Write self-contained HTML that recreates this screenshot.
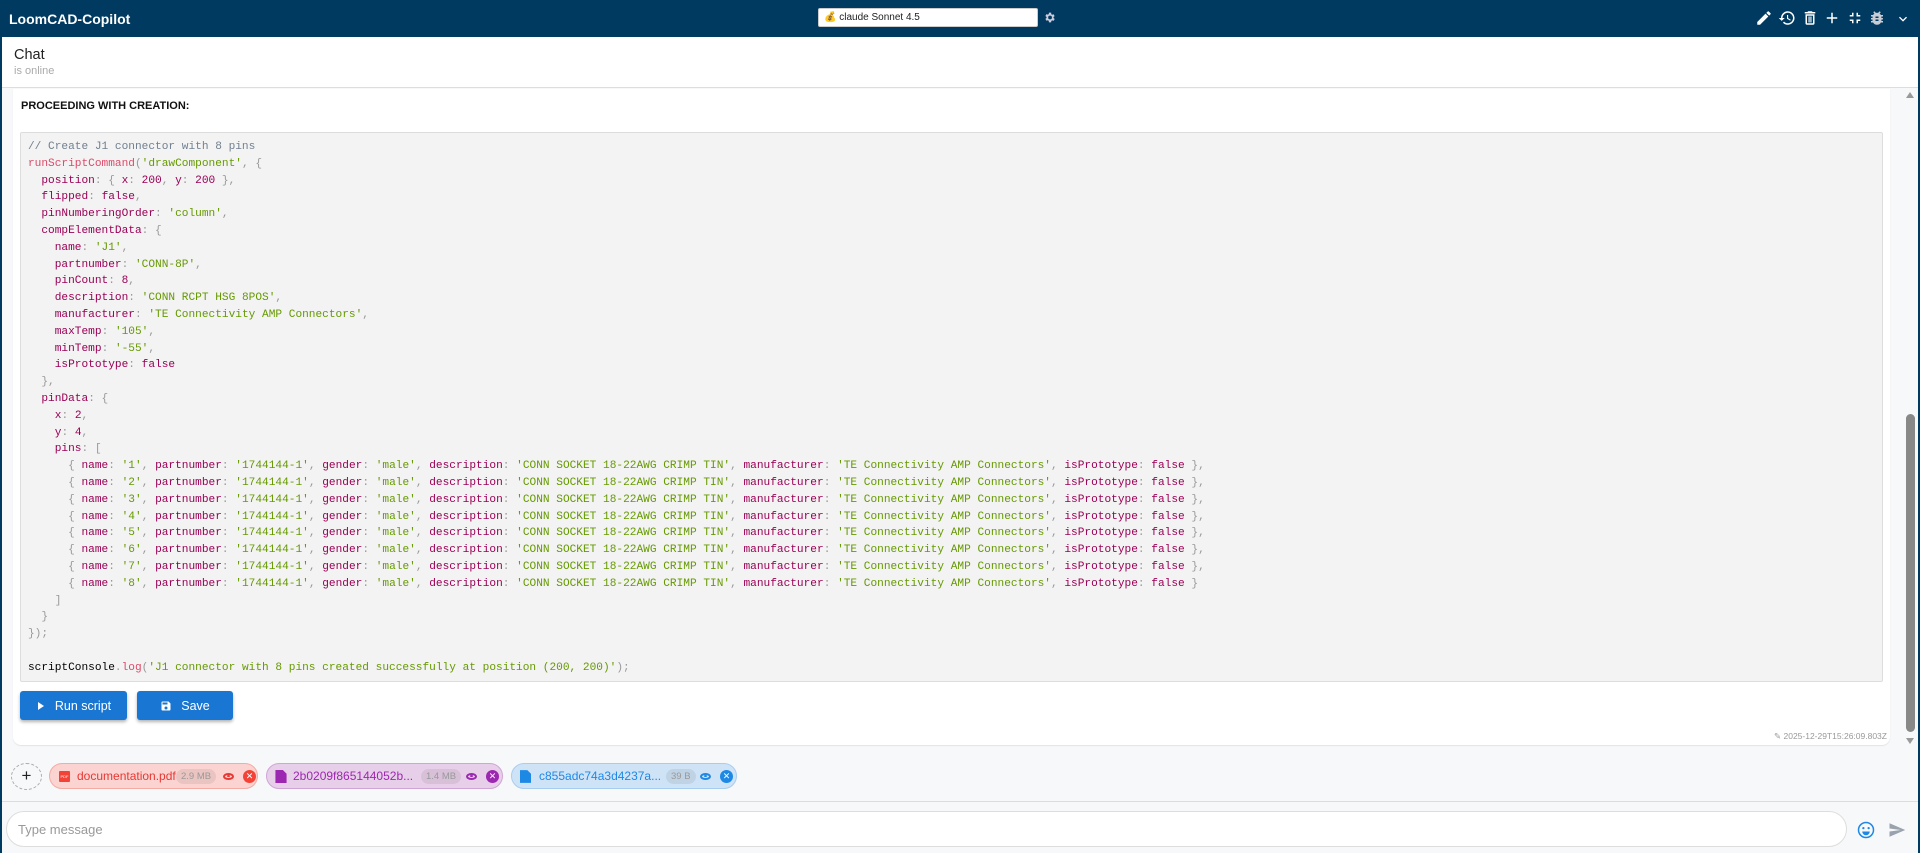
<!DOCTYPE html>
<html><head><meta charset="utf-8"><style>
*{box-sizing:border-box;margin:0;padding:0}
body{width:1920px;height:853px;overflow:hidden;font-family:"Liberation Sans",sans-serif;background:#f7f8fa;position:relative}
.hdr{position:absolute;left:0;top:0;width:1920px;height:37px;background:#003a60;color:#fff}
.hdr .t{position:absolute;left:9px;top:11px;font-size:14px;font-weight:bold}
.sel{position:absolute;left:818px;top:8px;width:220px;height:19px;background:#fff;border:1px solid #ccc;border-radius:2px;font-size:10px;color:#222;padding:3px 0 0 5px}
.chat{position:absolute;left:2px;top:37px;width:1916px;height:51px;background:#fff;border-bottom:1px solid #ddd}
.wrap{position:absolute;left:0;top:0;width:2px;height:853px;background:#003a60}
.wrapr{position:absolute;right:0;top:0;width:2px;height:853px;background:#003a60}
.card{position:absolute;left:13px;top:89px;width:1877px;height:656px;background:#fff;border-radius:0 0 8px 8px;box-shadow:0 1px 1px #e3e3e3}
.code{position:absolute;left:7px;top:43px;width:1863px;height:550px;background:#f3f3f3;border:1px solid #ddd;border-radius:2px;font-family:"Liberation Mono",monospace;font-size:11.15px;line-height:16.8px;padding:6px 0 0 7px;white-space:pre;color:#000}
.k{color:#990055}.s{color:#669900}.p{color:#999}.f{color:#dd4a68}.c{color:#708090}
.btn{position:absolute;top:691px;height:29px;background:#1976d2;color:#fff;font-size:12.5px;border-radius:3px;box-shadow:0 2px 3px rgba(0,0,0,.3);display:flex;align-items:center;justify-content:center;gap:9px}
.chip{position:absolute;top:763px;height:26px;border-radius:13px;border:1px solid;font-size:12px;display:flex;align-items:center}
.sz{font-size:9.5px;color:#999;background:rgba(0,0,0,.07);border-radius:8px;padding:2px 5px;position:absolute}
.inp{position:absolute;left:6px;top:811px;width:1841px;height:36px;background:#fff;border:1px solid #ddd;border-radius:18px;font-size:13px;color:#999;padding:10px 0 0 11px}
.eye{position:absolute;width:11px;height:7px;border:2px solid;border-radius:50%}
.eye:after{content:"";position:absolute;left:2px;top:0.5px;width:3px;height:2px;background:currentColor;border-radius:50%}
</style></head><body>
<div class="hdr"><div class="t">LoomCAD-Copilot</div>
<div class="sel">💰 claude Sonnet 4.5</div>
<svg style="position:absolute;left:1043px;top:11px" width="13" height="13" viewBox="0 0 24 24"><path fill="#ccd" d="M19.4 13a7.5 7.5 0 000-2l2.1-1.6-2-3.5-2.5 1a7 7 0 00-1.7-1L15 3h-4l-.4 2.7a7 7 0 00-1.7 1l-2.5-1-2 3.5L6.5 11a7.5 7.5 0 000 2l-2.1 1.6 2 3.5 2.5-1a7 7 0 001.7 1L11 21h4l.4-2.7a7 7 0 001.7-1l2.5 1 2-3.5zM13 15.5a3.5 3.5 0 110-7 3.5 3.5 0 010 7z"/></svg>
<svg style="position:absolute;left:1755px;top:9px" width="18" height="18" viewBox="0 0 24 24"><path fill="#fff" d="M3 17.25V21h3.75L17.8 9.94l-3.750-3.75zM20.7 7.04a1 1 0 000-1.41l-2.34-2.34a1 1 0 00-1.41 0l-1.83 1.83 3.75 3.75z"/></svg>
<svg style="position:absolute;left:1778px;top:9px" width="18" height="18" viewBox="0 0 24 24"><path fill="#fff" d="M13 3a9 9 0 00-9 9H1l3.9 3.9L9 12H6a7 7 0 112 4.9l-1.4 1.4A9 9 0 1013 3zm-1 5v5l4.3 2.5.7-1.2-3.5-2.1V8z"/></svg>
<svg style="position:absolute;left:1801px;top:9px" width="18" height="18" viewBox="0 0 24 24"><path fill="#fff" d="M6 19a2 2 0 002 2h8a2 2 0 002-2V7H6zM8 9h8v10H8zm7.5-5l-1-1h-5l-1 1H5v2h14V4zM10 10h1.5v8H10zm2.5 0H14v8h-1.5z"/></svg>
<svg style="position:absolute;left:1823px;top:9px" width="18" height="18" viewBox="0 0 24 24"><path fill="#fff" d="M19 13h-6v6h-2v-6H5v-2h6V5h2v6h6z"/></svg>
<svg style="position:absolute;left:1846px;top:9px" width="18" height="18" viewBox="0 0 24 24"><path fill="#fff" d="M5 16h3v3h2v-5H5zm3-8H5v2h5V5H8zm6 11h2v-3h3v-2h-5zm2-11V5h-2v5h5V8z"/></svg>
<svg style="position:absolute;left:1868px;top:9px" width="18" height="18" viewBox="0 0 24 24"><path fill="#c8ccd4" d="M20 8h-2.8a6 6 0 00-1.8-2l1.6-1.6L15.6 3l-2.2 2.2a6 6 0 00-2.8 0L8.4 3 7 4.4 8.6 6a6 6 0 00-1.8 2H4v2h2.1a6 6 0 000 1V12H4v2h2v1a6 6 0 000 1H4v2h2.8A6 6 0 0017.2 18H20v-2h-2.1a6 6 0 000-1v-1h2v-2h-2v-1a6 6 0 000-1H20zm-6 8h-4v-2h4zm0-4h-4v-2h4z"/></svg>
<svg style="position:absolute;left:1895px;top:11px" width="16" height="16" viewBox="0 0 24 24"><path fill="#fff" d="M7.4 8.6L12 13.2l4.6-4.6L18 10l-6 6-6-6z"/></svg>
</div>
<div class="wrap"></div><div class="wrapr"></div>
<div class="chat"><div style="position:absolute;left:12px;top:10px;font-size:14.5px;color:#222">Chat</div><div style="position:absolute;left:12px;top:28px;font-size:11px;color:#aaa">is online</div></div>
<div class="card">
<div style="position:absolute;left:8px;top:11px;font-size:11px;font-weight:bold;color:#111">PROCEEDING WITH CREATION:</div>
<div class="code"><span class="c">// Create J1 connector with 8 pins</span>
<span class="f">runScriptCommand</span><span class="p">(</span><span class="s">'drawComponent'</span><span class="p">, {</span>
  <span class="k">position</span><span class="p">: {</span> <span class="k">x</span><span class="p">:</span> <span class="k">200</span><span class="p">,</span> <span class="k">y</span><span class="p">:</span> <span class="k">200</span> <span class="p">},</span>
  <span class="k">flipped</span><span class="p">:</span> <span class="k">false</span><span class="p">,</span>
  <span class="k">pinNumberingOrder</span><span class="p">:</span> <span class="s">'column'</span><span class="p">,</span>
  <span class="k">compElementData</span><span class="p">: {</span>
    <span class="k">name</span><span class="p">:</span> <span class="s">'J1'</span><span class="p">,</span>
    <span class="k">partnumber</span><span class="p">:</span> <span class="s">'CONN-8P'</span><span class="p">,</span>
    <span class="k">pinCount</span><span class="p">:</span> <span class="k">8</span><span class="p">,</span>
    <span class="k">description</span><span class="p">:</span> <span class="s">'CONN RCPT HSG 8POS'</span><span class="p">,</span>
    <span class="k">manufacturer</span><span class="p">:</span> <span class="s">'TE Connectivity AMP Connectors'</span><span class="p">,</span>
    <span class="k">maxTemp</span><span class="p">:</span> <span class="s">'105'</span><span class="p">,</span>
    <span class="k">minTemp</span><span class="p">:</span> <span class="s">'-55'</span><span class="p">,</span>
    <span class="k">isPrototype</span><span class="p">:</span> <span class="k">false</span>
  <span class="p">},</span>
  <span class="k">pinData</span><span class="p">: {</span>
    <span class="k">x</span><span class="p">:</span> <span class="k">2</span><span class="p">,</span>
    <span class="k">y</span><span class="p">:</span> <span class="k">4</span><span class="p">,</span>
    <span class="k">pins</span><span class="p">: [</span>
      <span class="p">{</span> <span class="k">name</span><span class="p">:</span> <span class="s">'1'</span><span class="p">,</span> <span class="k">partnumber</span><span class="p">:</span> <span class="s">'1744144-1'</span><span class="p">,</span> <span class="k">gender</span><span class="p">:</span> <span class="s">'male'</span><span class="p">,</span> <span class="k">description</span><span class="p">:</span> <span class="s">'CONN SOCKET 18-22AWG CRIMP TIN'</span><span class="p">,</span> <span class="k">manufacturer</span><span class="p">:</span> <span class="s">'TE Connectivity AMP Connectors'</span><span class="p">,</span> <span class="k">isPrototype</span><span class="p">:</span> <span class="k">false</span> <span class="p">},</span>
      <span class="p">{</span> <span class="k">name</span><span class="p">:</span> <span class="s">'2'</span><span class="p">,</span> <span class="k">partnumber</span><span class="p">:</span> <span class="s">'1744144-1'</span><span class="p">,</span> <span class="k">gender</span><span class="p">:</span> <span class="s">'male'</span><span class="p">,</span> <span class="k">description</span><span class="p">:</span> <span class="s">'CONN SOCKET 18-22AWG CRIMP TIN'</span><span class="p">,</span> <span class="k">manufacturer</span><span class="p">:</span> <span class="s">'TE Connectivity AMP Connectors'</span><span class="p">,</span> <span class="k">isPrototype</span><span class="p">:</span> <span class="k">false</span> <span class="p">},</span>
      <span class="p">{</span> <span class="k">name</span><span class="p">:</span> <span class="s">'3'</span><span class="p">,</span> <span class="k">partnumber</span><span class="p">:</span> <span class="s">'1744144-1'</span><span class="p">,</span> <span class="k">gender</span><span class="p">:</span> <span class="s">'male'</span><span class="p">,</span> <span class="k">description</span><span class="p">:</span> <span class="s">'CONN SOCKET 18-22AWG CRIMP TIN'</span><span class="p">,</span> <span class="k">manufacturer</span><span class="p">:</span> <span class="s">'TE Connectivity AMP Connectors'</span><span class="p">,</span> <span class="k">isPrototype</span><span class="p">:</span> <span class="k">false</span> <span class="p">},</span>
      <span class="p">{</span> <span class="k">name</span><span class="p">:</span> <span class="s">'4'</span><span class="p">,</span> <span class="k">partnumber</span><span class="p">:</span> <span class="s">'1744144-1'</span><span class="p">,</span> <span class="k">gender</span><span class="p">:</span> <span class="s">'male'</span><span class="p">,</span> <span class="k">description</span><span class="p">:</span> <span class="s">'CONN SOCKET 18-22AWG CRIMP TIN'</span><span class="p">,</span> <span class="k">manufacturer</span><span class="p">:</span> <span class="s">'TE Connectivity AMP Connectors'</span><span class="p">,</span> <span class="k">isPrototype</span><span class="p">:</span> <span class="k">false</span> <span class="p">},</span>
      <span class="p">{</span> <span class="k">name</span><span class="p">:</span> <span class="s">'5'</span><span class="p">,</span> <span class="k">partnumber</span><span class="p">:</span> <span class="s">'1744144-1'</span><span class="p">,</span> <span class="k">gender</span><span class="p">:</span> <span class="s">'male'</span><span class="p">,</span> <span class="k">description</span><span class="p">:</span> <span class="s">'CONN SOCKET 18-22AWG CRIMP TIN'</span><span class="p">,</span> <span class="k">manufacturer</span><span class="p">:</span> <span class="s">'TE Connectivity AMP Connectors'</span><span class="p">,</span> <span class="k">isPrototype</span><span class="p">:</span> <span class="k">false</span> <span class="p">},</span>
      <span class="p">{</span> <span class="k">name</span><span class="p">:</span> <span class="s">'6'</span><span class="p">,</span> <span class="k">partnumber</span><span class="p">:</span> <span class="s">'1744144-1'</span><span class="p">,</span> <span class="k">gender</span><span class="p">:</span> <span class="s">'male'</span><span class="p">,</span> <span class="k">description</span><span class="p">:</span> <span class="s">'CONN SOCKET 18-22AWG CRIMP TIN'</span><span class="p">,</span> <span class="k">manufacturer</span><span class="p">:</span> <span class="s">'TE Connectivity AMP Connectors'</span><span class="p">,</span> <span class="k">isPrototype</span><span class="p">:</span> <span class="k">false</span> <span class="p">},</span>
      <span class="p">{</span> <span class="k">name</span><span class="p">:</span> <span class="s">'7'</span><span class="p">,</span> <span class="k">partnumber</span><span class="p">:</span> <span class="s">'1744144-1'</span><span class="p">,</span> <span class="k">gender</span><span class="p">:</span> <span class="s">'male'</span><span class="p">,</span> <span class="k">description</span><span class="p">:</span> <span class="s">'CONN SOCKET 18-22AWG CRIMP TIN'</span><span class="p">,</span> <span class="k">manufacturer</span><span class="p">:</span> <span class="s">'TE Connectivity AMP Connectors'</span><span class="p">,</span> <span class="k">isPrototype</span><span class="p">:</span> <span class="k">false</span> <span class="p">},</span>
      <span class="p">{</span> <span class="k">name</span><span class="p">:</span> <span class="s">'8'</span><span class="p">,</span> <span class="k">partnumber</span><span class="p">:</span> <span class="s">'1744144-1'</span><span class="p">,</span> <span class="k">gender</span><span class="p">:</span> <span class="s">'male'</span><span class="p">,</span> <span class="k">description</span><span class="p">:</span> <span class="s">'CONN SOCKET 18-22AWG CRIMP TIN'</span><span class="p">,</span> <span class="k">manufacturer</span><span class="p">:</span> <span class="s">'TE Connectivity AMP Connectors'</span><span class="p">,</span> <span class="k">isPrototype</span><span class="p">:</span> <span class="k">false</span> <span class="p">}</span>
    <span class="p">]</span>
  <span class="p">}</span>
<span class="p">});</span>

scriptConsole<span class="p">.</span><span class="f">log</span><span class="p">(</span><span class="s">'J1 connector with 8 pins created successfully at position (200, 200)'</span><span class="p">);</span></div>
</div>
<div class="btn" style="left:20px;width:107px"><svg width="10" height="10" viewBox="0 0 10 10"><path fill="#fff" d="M2 1l6 4-6 4z"/></svg>Run script</div>
<div class="btn" style="left:137px;width:96px"><svg width="12" height="12" viewBox="0 0 24 24"><path fill="#fff" d="M17 3H5a2 2 0 00-2 2v14a2 2 0 002 2h14a2 2 0 002-2V7zm-5 16a3 3 0 110-6 3 3 0 010 6zm3-10H5V5h10z"/></svg>Save</div>
<div style="position:absolute;left:1774px;top:731px;font-size:8.5px;color:#999">✎ 2025-12-29T15:26:09.803Z</div>
<div style="position:absolute;left:1906px;top:92px;width:0;height:0;border-left:4px solid transparent;border-right:4px solid transparent;border-bottom:6px solid #999"></div>
<div style="position:absolute;left:1906px;top:414px;width:9px;height:318px;background:#888;border-radius:5px"></div>
<div style="position:absolute;left:1906px;top:738px;width:0;height:0;border-left:4px solid transparent;border-right:4px solid transparent;border-top:6px solid #999"></div>
<div style="position:absolute;left:11px;top:763px;width:31px;height:27px;border:1px dashed #aaa;border-radius:50%;text-align:center;font-size:17px;line-height:24px;color:#222">+</div>
<div class="chip" style="left:49px;width:209px;background:#fbd3d0;border-color:#f5aaa4;color:#e53935">
<div style="position:absolute;left:9px;width:11px;height:11px;background:#f44336;border-radius:1px;font-size:4px;color:#fff;text-align:center;line-height:11px">PDF</div>
<span style="position:absolute;left:27px">documentation.pdf</span><span class="sz" style="left:126px">2.9 MB</span>
<span class="eye" style="left:173px"></span><span style="position:absolute;left:193px;width:13px;height:13px;border-radius:50%;background:#f44336;color:#fff;font-size:9px;text-align:center;line-height:13px">✕</span></div>
<div class="chip" style="left:266px;width:237px;background:#e8cfe9;border-color:#d0a4d6;color:#9c27b0">
<svg style="position:absolute;left:8px" width="12" height="13" viewBox="0 0 12 14"><path fill="#9c27b0" d="M0 0h8l4 4v10H0z"/></svg>
<span style="position:absolute;left:26px">2b0209f865144052b...</span><span class="sz" style="left:154px">1.4 MB</span>
<span class="eye" style="left:199px"></span><span style="position:absolute;left:219px;width:13px;height:13px;border-radius:50%;background:#9c27b0;color:#fff;font-size:9px;text-align:center;line-height:13px">✕</span></div>
<div class="chip" style="left:511px;width:226px;background:#cfe3f7;border-color:#a9cdf0;color:#1e88e5">
<svg style="position:absolute;left:8px" width="11" height="13" viewBox="0 0 12 14"><path fill="#1e88e5" d="M0 0h8l4 4v10H0z"/></svg>
<span style="position:absolute;left:27px">c855adc74a3d4237a...</span><span class="sz" style="left:154px">39 B</span>
<span class="eye" style="left:188px"></span><span style="position:absolute;left:208px;width:13px;height:13px;border-radius:50%;background:#1e88e5;color:#fff;font-size:9px;text-align:center;line-height:13px">✕</span></div>
<div style="position:absolute;left:2px;top:801px;width:1916px;height:1px;background:#ddd"></div>
<div class="inp">Type message</div>
<svg style="position:absolute;left:1857px;top:821px" width="18" height="18" viewBox="0 0 24 24"><circle cx="12" cy="12" r="10" fill="none" stroke="#1e88e5" stroke-width="2"/><circle cx="8.5" cy="9.5" r="1.5" fill="#1e88e5"/><circle cx="15.5" cy="9.5" r="1.5" fill="#1e88e5"/><path d="M7 14a5 5 0 0010 0z" fill="#1e88e5"/></svg>
<svg style="position:absolute;left:1887px;top:821px" width="20" height="18" viewBox="0 0 24 24"><path fill="#9aa3ad" d="M2 21l21-9L2 3v7l15 2-15 2z"/></svg>
</body></html>
